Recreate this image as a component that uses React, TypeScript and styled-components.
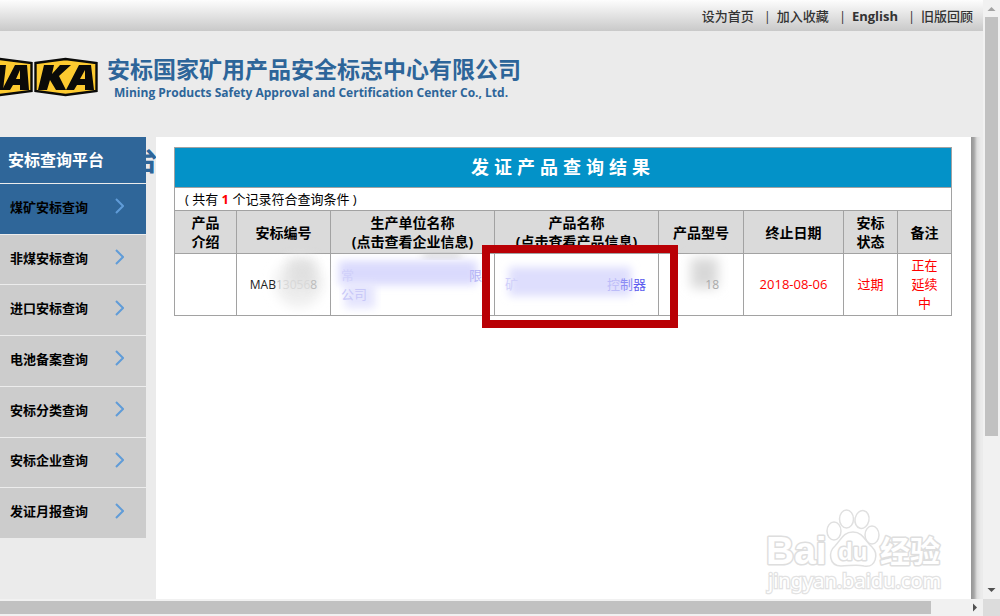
import React from "react";
import styled, { createGlobalStyle } from "styled-components";

const sans = `"Open Sans", "Noto Sans CJK SC", sans-serif`;

const GlobalStyle = createGlobalStyle`
  * { box-sizing: border-box; }
  body { margin: 0; background: #ebebeb; font-family: ${sans}; font-size: 13px; color: #000; }
  a { color: inherit; text-decoration: none; }
`;

const Viewport = styled.div`
  display: grid;
  grid-template-columns: minmax(0, 1fr) 17px;
  grid-template-rows: minmax(0, 1fr) 17px;
  height: 100vh;
`;

const Page = styled.div`
  display: flex;
  flex-direction: column;
  min-height: 0;
  overflow: hidden;
`;

const TopBar = styled.nav`
  flex: none;
  display: flex;
  justify-content: flex-end;
  align-items: center;
  gap: 10px;
  height: 31px;
  padding-right: 10px;
  background: linear-gradient(#fdfdfd, #c9c9c9);
  color: #333;
`;

const TopLink = styled.a<{ $strong?: boolean }>`
  font-weight: ${(p) => (p.$strong ? 700 : 500)};
`;

const Divider = styled.span`
  width: 3px;
  text-align: center;
`;

const Header = styled.header`
  flex: none;
  display: flex;
  align-items: flex-start;
  height: 106px;
  padding-top: 24px;
  color: #2d6599;
`;

const Logo = styled.svg`
  flex: none;
  width: 98px;
  height: 42px;
  margin-right: 9px;
`;

const Company = styled.h1`
  margin: 0;
  font-size: 23px;
  line-height: 28px;
  font-weight: 700;
`;

const CompanyEn = styled.p`
  margin: 0 0 0 7px;
  font: 700 12px/20px "Open Sans", sans-serif;
`;

const Body = styled.div`
  flex: 1;
  display: flex;
  min-height: 0;
`;

const Sidebar = styled.aside`
  flex: none;
  width: 156px;
  padding-right: 10px;
  position: relative;
`;

const Banner = styled.span`
  position: absolute;
  right: -2px;
  top: 6px;
  color: #2d6599;
  font-size: 28px;
  line-height: 34px;
  font-weight: 700;
`;

const SideTitle = styled.h2`
  position: relative;
  margin: 0;
  height: 46px;
  padding-left: 8px;
  background: #2f6699;
  color: #fff;
  font-size: 16px;
  line-height: 46px;
  font-weight: 700;
`;

const Menu = styled.ul`
  position: relative;
  display: grid;
  grid-auto-rows: 1fr;
  height: 355px;
  margin: 0;
  padding: 0;
  list-style: none;
`;

const MenuLink = styled.a<{ $active?: boolean }>`
  display: flex;
  align-items: center;
  justify-content: space-between;
  height: 100%;
  padding: 0 22px 5px 10px;
  border-top: 1px solid #ececec;
  background: ${(p) => (p.$active ? "#2f6699" : "#ccc")};
  font-weight: 700;
`;

const Chevron = styled.svg`
  width: 9px;
  height: 16px;
  fill: none;
  stroke: #609cd8;
  stroke-width: 2;
`;

const Main = styled.main`
  position: relative;
  flex: 1;
  min-width: 0;
  display: flex;
  flex-direction: column;
  padding: 10px 19px 4px 18px;
  background: #fff;
`;

const Edge = styled.div`
  flex: none;
  width: 12px;
  background: linear-gradient(to right, #949494, #a6a6a6 3px, #dcdcdc 6px, #ebebeb 10px);
`;

const Results = styled.table`
  width: 100%;
  table-layout: fixed;
  border-collapse: collapse;
  text-align: center;
  line-height: 19px;
  th, td { padding: 0; border: 1px solid #a2a2a2; }
`;

const Caption = styled.th`
  height: 40px;
  background: #0392c8;
  color: #fff;
  font-size: 18px;
  letter-spacing: 5px;
`;

const Count = styled.td`
  height: 23px;
  text-align: left;
  text-indent: 10px;
  b { color: red; }
`;

const HeadCell = styled.th`
  height: 43px;
  background: #dadada;
  font-size: 14px;
  line-height: 19px;
  font-weight: 700;
`;

const Cell = styled.td<{ $red?: boolean }>`
  height: 62px;
  color: ${(p) => (p.$red ? "red" : "#333")};
`;

const NarrowText = styled.span`
  display: inline-block;
  width: 28px;
`;

const Masked = styled.div`
  position: relative;
  display: flex;
  flex-direction: column;
  justify-content: center;
  height: 61px;
`;

const MaskLine = styled.a<{ $split?: boolean }>`
  position: relative;
  display: flex;
  justify-content: ${(p) => (p.$split ? "space-between" : "flex-start")};
  padding: 0 12px 0 10px;
`;

const Ink = styled.span<{ $tone: string }>`
  color: ${(p) => p.$tone};
`;

const CodeText = styled.span<{ $end?: boolean }>`
  position: relative;
  padding-right: ${(p) => (p.$end ? "24px" : "0")};
  text-align: ${(p) => (p.$end ? "right" : "center")};
  font-size: 12px;
`;

const Smudge = styled.svg`
  position: absolute;
  inset: 0;
  width: 100%;
  height: 100%;
  overflow: visible;
`;

const HighlightAnchor = styled.div`
  position: relative;
`;

const Highlight = styled.div`
  position: absolute;
  z-index: 2;
  inset: -9px -20px -13px -13px;
  border: 8px solid #b90005;
`;

const WatermarkSvg = styled.svg`
  width: 182px;
  height: 90px;
  margin: auto 8px 0 0;
  align-self: flex-end;
`;

const VScroll = styled.div`
  display: flex;
  flex-direction: column;
  align-items: center;
  background: #f1f1f1;
`;

const VThumb = styled.div`
  width: 13px;
  flex: 0 0 70%;
  background: #c1c1c1;
`;

const HScroll = styled.div`
  display: flex;
  align-items: center;
  background: #f1f1f1;
`;

const HThumb = styled.div`
  height: 13px;
  flex: 0 0 calc(100% - 52px);
  background: #c1c1c1;
`;

const Corner = styled.div`
  background: #dcdcdc;
`;

const Arrow = styled.svg<{ $end?: boolean }>`
  flex: none;
  width: 17px;
  height: 17px;
  ${(p) => p.$end && "margin: auto 0 0 auto;"}
`;

const items = [
  "煤矿安标查询",
  "非煤安标查询",
  "进口安标查询",
  "电池备案查询",
  "安标分类查询",
  "安标企业查询",
  "发证月报查询",
];

const columns = [62, 94, 164, 164, 85, 100, 54, 54];
const total = columns.reduce((sum, w) => sum + w, 0);

function Watermark() {
  return (
    <WatermarkSvg viewBox="0 0 182 90" aria-label="Baidu 经验">
      <g fill="#fff" stroke="#e0e0e0" strokeWidth="1.5" strokeLinejoin="round">
        <ellipse cx="72" cy="26" rx="7" ry="9" />
        <ellipse cx="84.500" cy="14" rx="7" ry="9" />
        <ellipse cx="100" cy="14.500" rx="7" ry="9" transform="rotate(12 100 14.500)" />
        <ellipse cx="110" cy="30" rx="7" ry="9" />
        <path d="M91 27c-10 0-12 8-18 14-7 6-6 20 6 20 8 0 15-2 23 0 12 2 15-12 8-19-7-6-9-15-19-15z" />
      </g>
      <g stroke="#dedede" strokeWidth="3" paintOrder="stroke" fill="#fff" strokeLinejoin="round" fontWeight="700">
        <text x="4" y="59" fontSize="39" fontFamily="Liberation Sans">Bai</text>
        <text x="76" y="55" fontSize="24" fontFamily="Liberation Sans">du</text>
        <text x="118" y="57" fontSize="30" fontFamily="Noto Sans CJK SC">经验</text>
      </g>
      <text x="6" y="83" fontSize="20" fontFamily="Noto Sans" stroke="#e2e2e2" strokeWidth="2.500" paintOrder="stroke" fill="#fff">
        jingyan.baidu.com
      </text>
    </WatermarkSvg>
  );
}

export default function App() {
  return (
    <Viewport>
      <GlobalStyle />
      <Page>
        <TopBar>
          <TopLink href="#">设为首页</TopLink>
          <Divider>|</Divider>
          <TopLink href="#">加入收藏</TopLink>
          <Divider>|</Divider>
          <TopLink href="#" $strong>English</TopLink>
          <Divider>|</Divider>
          <TopLink href="#">旧版回顾</TopLink>
        </TopBar>
        <Header>
          <Logo viewBox="0 0 98 42" aria-label="MAKA">
            <g fill="#fdca2f" stroke="#0a0a08" strokeWidth="2.400">
              <path d="M-32 8 0 4 31.500 8V36L0 40-32 36Z" />
              <path d="M35.500 8 65.500 4 96.500 8V36L65.500 40 35.500 36Z" />
            </g>
            <g fill="#0a0a08">
              <path d="M-6 35 0 10H6L3 35Z" />
              <path fillRule="evenodd" d="M2 35 15 10H27L29 35H20V30H13L10 35ZM16 24H20V15Z" />
              <path d="M38 35 44 10H54L52 19 60 10H71L59 21 66 35H56L50 25 47 35Z" />
              <path fillRule="evenodd" d="M66 35 79 10H91L94 35H85V30H77L74 35ZM80 24H85V15Z" />
            </g>
          </Logo>
          <div>
            <Company>安标国家矿用产品安全标志中心有限公司</Company>
            <CompanyEn>Mining Products Safety Approval and Certification Center Co., Ltd.</CompanyEn>
          </div>
        </Header>
        <Body>
          <Sidebar>
            <Banner>台</Banner>
            <SideTitle>安标查询平台</SideTitle>
            <Menu>
              {items.map((label, i) => (
                <li key={label}>
                  <MenuLink href="#" $active={i === 0}>
                    {label}
                    <Chevron viewBox="0 0 9 16"><path d="M1 1l7 7-7 7" /></Chevron>
                  </MenuLink>
                </li>
              ))}
            </Menu>
          </Sidebar>
          <Main>
            <Results>
              <colgroup>
                {columns.map((w, i) => (
                  <col key={i} style={{ width: `${(w / total) * 100}%` }} />
                ))}
              </colgroup>
              <thead>
                <tr><Caption colSpan={8}>发证产品查询结果</Caption></tr>
                <tr><Count colSpan={8}>( 共有 <b>1</b> 个记录符合查询条件 )</Count></tr>
                <tr>
                  <HeadCell>产品<br />介绍</HeadCell>
                  <HeadCell>安标编号</HeadCell>
                  <HeadCell>生产单位名称<br />(点击查看企业信息)</HeadCell>
                  <HeadCell>产品名称<br />(点击查看产品信息)</HeadCell>
                  <HeadCell>产品型号</HeadCell>
                  <HeadCell>终止日期</HeadCell>
                  <HeadCell>安标<br />状态</HeadCell>
                  <HeadCell>备注</HeadCell>
                </tr>
              </thead>
              <tbody>
                <tr>
                  <Cell />
                  <Cell>
                    <Masked>
                      <Smudge viewBox="0 0 93 61" preserveAspectRatio="none">
                        <defs>
                          <filter id="soft" x="-40%" y="-40%" width="180%" height="180%"><feGaussianBlur stdDeviation="6" /></filter>
                        </defs>
                        <ellipse cx="62" cy="29" rx="24" ry="24" fill="#eee" filter="url(#soft)" />
                        <path d="M52 5h26v28H52z" fill="#ddd" opacity=".8" filter="url(#soft)" />
                      </Smudge>
                      <CodeText>
                        <Ink $tone="#222">MAB</Ink><Ink $tone="#c4c4c4">1</Ink><Ink $tone="#d8d8d8">3056</Ink><Ink $tone="#bbb">8</Ink>
                      </CodeText>
                    </Masked>
                  </Cell>
                  <Cell>
                    <Masked>
                      <Smudge viewBox="0 0 163 61" preserveAspectRatio="none">
                        <defs>
                          <filter id="haze" x="-20%" y="-40%" width="140%" height="180%"><feGaussianBlur stdDeviation="4" /></filter>
                        </defs>
                        <path d="M92 0h38v4H92z" fill="#bbb" filter="url(#haze)" />
                        <path d="M8 7h138v24H8z" fill="#dadafd" filter="url(#haze)" />
                        <path d="M14 30h30v24H14z" fill="#e4e4fd" filter="url(#haze)" />
                      </Smudge>
                      <MaskLine href="#" $split><Ink $tone="#d0d0fa">常</Ink><Ink $tone="#b4b4f6">限</Ink></MaskLine>
                      <MaskLine href="#"><Ink $tone="#c8c8f8">公司</Ink></MaskLine>
                    </Masked>
                  </Cell>
                  <Cell>
                    <HighlightAnchor>
                      <Masked>
                        <Smudge viewBox="0 0 163 61" preserveAspectRatio="none">
                          <path d="M14 13h122v29H14z" fill="#dedefd" filter="url(#haze)" />
                        </Smudge>
                        <MaskLine href="#" $split>
                          <Ink $tone="#d0d0fa">矿</Ink>
                          <span><Ink $tone="#bcbcf8">控</Ink><Ink $tone="#8c8cf4">制</Ink><Ink $tone="#5c5cee">器</Ink></span>
                        </MaskLine>
                      </Masked>
                      <Highlight />
                    </HighlightAnchor>
                  </Cell>
                  <Cell>
                    <Masked>
                      <Smudge viewBox="0 0 84 61" preserveAspectRatio="none">
                        <path d="M32 4h27v30H32z" fill="#d8d8d8" filter="url(#soft)" />
                      </Smudge>
                      <CodeText $end><Ink $tone="#aaa">18</Ink></CodeText>
                    </Masked>
                  </Cell>
                  <Cell $red>2018-08-06</Cell>
                  <Cell $red>过期</Cell>
                  <Cell $red><NarrowText>正在延续中</NarrowText></Cell>
                </tr>
              </tbody>
            </Results>
            <Watermark />
          </Main>
          <Edge />
        </Body>
      </Page>
      <VScroll>
        <Arrow viewBox="0 0 17 17"><path d="M4.500 11h8l-4-4z" fill="#a3a3a3" /></Arrow>
        <VThumb />
        <Arrow $end viewBox="0 0 17 17"><path d="M4.500 6h8l-4 4z" fill="#505050" /></Arrow>
      </VScroll>
      <HScroll>
        <HThumb />
        <Arrow $end viewBox="0 0 17 17"><path d="M7 4.500v8l4-4z" fill="#505050" /></Arrow>
      </HScroll>
      <Corner />
    </Viewport>
  );
}
